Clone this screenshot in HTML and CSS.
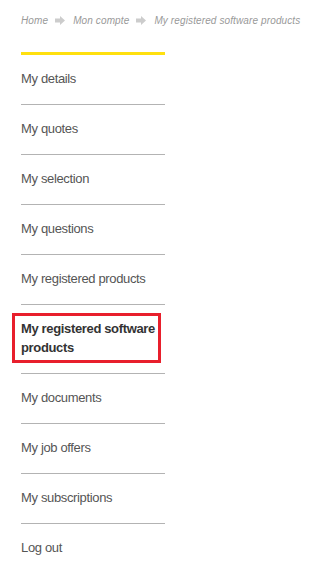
FILE: index.html
```html
<!DOCTYPE html>
<html lang="en">
  <head>
    <meta charset="UTF-8" />
    <meta name="viewport" content="width=device-width, initial-scale=1.0" />
    <title>My registered software products</title>
    <link rel="stylesheet" href="styles.css">
  </head>
  <body>
    <div class="breadcrumb">
      <a href="#">Home</a>
      <svg class="crumb-arrow" width="10" height="9" viewBox="0 0 10 9"><path d="M0 2.5h5V0l5 4.5-5 4.5V6.5H0z" /></svg>
      <a href="#">Mon compte</a>
      <svg class="crumb-arrow" width="10" height="9" viewBox="0 0 10 9"><path d="M0 2.5h5V0l5 4.5-5 4.5V6.5H0z" /></svg>
      <span>My registered software products</span>
    </div>

    <ul class="account-menu">
      <li><a href="#">My details</a></li>
      <li><a href="#">My quotes</a></li>
      <li><a href="#">My selection</a></li>
      <li><a href="#">My questions</a></li>
      <li><a href="#">My registered products</a></li>
      <li class="active"><a href="#">My registered software products</a></li>
      <li><a href="#">My documents</a></li>
      <li><a href="#">My job offers</a></li>
      <li><a href="#">My subscriptions</a></li>
      <li><a href="#">Log out</a></li>
    </ul>
  </body>
</html>
```

FILE: styles.css
```css
body {
  font-family: "Liberation Sans", Arial, sans-serif;
  margin: 0;
  padding: 0;
  background-color: #fff;
}

.breadcrumb {
  display: flex;
  align-items: center;
  padding: 13px 0 0 21px;
  height: 14px;
  font-size: 10px;
  font-style: italic;
  letter-spacing: 0.12px;
  color: #999;
  white-space: nowrap;
}

.breadcrumb a {
  color: #999;
  text-decoration: none;
}

.crumb-arrow {
  fill: #ccc;
  margin: 0 8px 0 7px;
}

.account-menu {
  list-style: none;
  margin: 25px 0 0 21px;
  padding: 0;
  width: 144px;
  border-top: 3px solid #ffe00f;
}

.account-menu li {
  padding: 14px 0 16px;
  border-bottom: 1px solid #b3b3b3;
  font-size: 13px;
  line-height: 19px;
  letter-spacing: -0.35px;
}

.account-menu li:last-child {
  border-bottom: none;
}

.account-menu a {
  display: block;
  color: #555;
  text-decoration: none;
}

.account-menu li.active a {
  position: relative;
  font-weight: bold;
  color: #333;
}

/* cadre rouge autour de la page courante */
.account-menu li.active a::after {
  content: "";
  position: absolute;
  top: -6px;
  bottom: -6px;
  left: -9px;
  right: 4px;
  border: 3px solid #e81f2c;
}
```
